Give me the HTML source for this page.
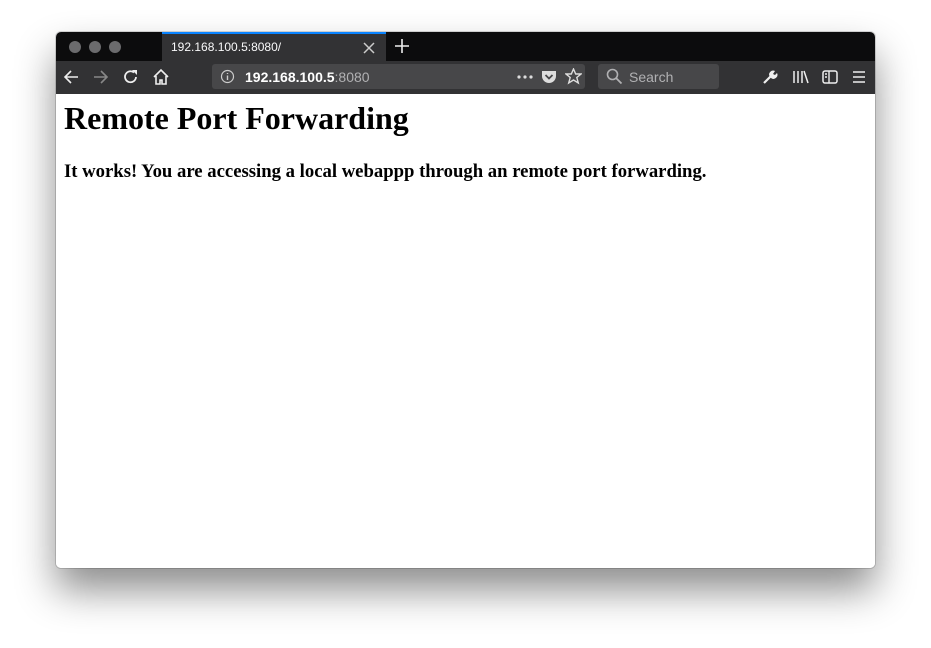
<!DOCTYPE html>
<html><head><style>
body{margin:0;width:931px;height:648px;background:#fff;position:relative;overflow:hidden;font-family:"Liberation Sans",sans-serif}
.win{position:absolute;left:56px;top:32px;width:819px;height:536px;border-radius:5px;overflow:hidden;background:#fff;box-shadow:0 22px 40px rgba(0,0,0,.45),0 0 0 1px rgba(0,0,0,.15)}
.tabs{position:absolute;left:0;top:0;width:819px;height:29px;background:#0c0c0d}
.dot{position:absolute;top:9px;width:12px;height:12px;border-radius:50%;background:#6b6b6d}
.tab{position:absolute;left:106px;top:0;width:224px;height:29px;background:#323234;border-top:2px solid #0a84ff;box-sizing:border-box;color:#f9f9fa;font-size:12px}
.tool{position:absolute;left:0;top:29px;width:819px;height:33px;background:#323234;border-bottom:1px solid #111}
.url{position:absolute;left:156px;top:3px;width:373px;height:25px;background:#474749;border-radius:3px}
.search{position:absolute;left:542px;top:3px;width:121px;height:25px;background:#474749;border-radius:3px;color:#b1b1b3;font-size:14px}
svg{position:absolute}
.c{position:absolute;top:62px;left:0;right:0;bottom:0;background:#fff;font-family:"Liberation Serif",serif;color:#000}
h1{position:absolute;left:8px;top:6px;margin:0;font-size:32px;font-weight:bold}
p{position:absolute;left:8px;top:67px;margin:0;font-size:18.7px;font-weight:bold}
</style></head><body>
<div class="win">
<div class="tabs">
<div class="dot" style="left:13px"></div><div class="dot" style="left:33px"></div><div class="dot" style="left:53px"></div>
<div class="tab"><span style="position:absolute;left:9px;top:6px">192.168.100.5:8080/</span>
<svg style="left:201px;top:8px" width="12" height="12"><path d="M1 1L11 11M11 1L1 11" stroke="#ccc" stroke-width="1.5"/></svg></div>
<svg style="left:339px;top:7px" width="14" height="14"><path d="M7 0V14M0 7H14" stroke="#eee" stroke-width="1.6"/></svg>
</div>
<div class="tool">
<svg style="left:7px;top:8px" width="16" height="16"><path d="M15 8H2M8 2L2 8L8 14" stroke="#eee" stroke-width="1.6" fill="none"/></svg>
<svg style="left:37px;top:8px" width="16" height="16"><path d="M1 8H14M8 2L14 8L8 14" stroke="#888" stroke-width="1.6" fill="none"/></svg>
<svg style="left:67px;top:8px" width="16" height="16"><path d="M13 8A5.5 5.5 0 1 1 11 3.5" stroke="#eee" stroke-width="1.8" fill="none"/><path d="M9 1H14V6Z" fill="#eee"/></svg>
<svg style="left:96px;top:7px" width="18" height="18"><path d="M2 9L9 2L16 9M4 8V16H8V12H10V16H14V8" stroke="#eee" stroke-width="1.6" fill="none"/></svg>
<div class="url">
<svg style="left:8px;top:5px" width="15" height="15"><circle cx="7.5" cy="7.5" r="6" stroke="#ccc" stroke-width="1.2" fill="none"/><path d="M7.5 6.5V11M7.5 4V5" stroke="#ccc" stroke-width="1.4"/></svg>
<span style="position:absolute;left:33px;top:5px;font-size:14px;color:#fff;font-weight:bold">192.168.100.5<span style="color:#b1b1b3;font-weight:normal">:8080</span></span>
<svg style="left:305px;top:11px" width="16" height="4"><circle cx="2" cy="2" r="1.6" fill="#ddd"/><circle cx="8" cy="2" r="1.6" fill="#ddd"/><circle cx="14" cy="2" r="1.6" fill="#ddd"/></svg>
<svg style="left:329px;top:5px" width="16" height="15"><path d="M1 2H15V7A7 7 0 0 1 1 7Z" fill="#ddd"/><path d="M4.5 6L8 9.5L11.5 6" stroke="#474749" stroke-width="1.8" fill="none"/></svg>
<svg style="left:353px;top:4px" width="17" height="17"><path d="M8.5 1L10.7 6H16L11.8 9.5L13.3 15L8.5 12L3.7 15L5.2 9.5L1 6H6.3Z" stroke="#ddd" stroke-width="1.4" fill="none"/></svg>
</div>
<div class="search">
<svg style="left:8px;top:4px" width="17" height="17"><circle cx="6.5" cy="6.5" r="5" stroke="#b1b1b3" stroke-width="1.6" fill="none"/><path d="M10 10L15.5 15.5" stroke="#b1b1b3" stroke-width="1.8"/></svg>
<span style="position:absolute;left:31px;top:5px">Search</span></div>
<svg style="left:706px;top:8px" width="16" height="16"><path d="M2 14L9 7" stroke="#eee" stroke-width="2.2"/><path d="M8 8A4 4 0 0 1 13 2L11 5L13 6L15 4A4 4 0 0 1 9 9Z" fill="#eee"/></svg>
<svg style="left:736px;top:8px" width="18" height="16"><path d="M2 2V14M6 2V14M10 2V14M12 2L16 14" stroke="#eee" stroke-width="1.5"/></svg>
<svg style="left:766px;top:8px" width="16" height="16"><rect x="1" y="2" width="14" height="12" rx="2" stroke="#eee" stroke-width="1.5" fill="none"/><path d="M7 2V14M3 5H5M3 8H5" stroke="#eee" stroke-width="1.4"/></svg>
<svg style="left:796px;top:9px" width="14" height="14"><path d="M1 2H13M1 7H13M1 12H13" stroke="#eee" stroke-width="1.5"/></svg>
</div>
<div class="c">
<h1>Remote Port Forwarding</h1>
<p>It works! You are accessing a local webappp through an remote port forwarding.</p>
</div>
</div>
</body></html>
